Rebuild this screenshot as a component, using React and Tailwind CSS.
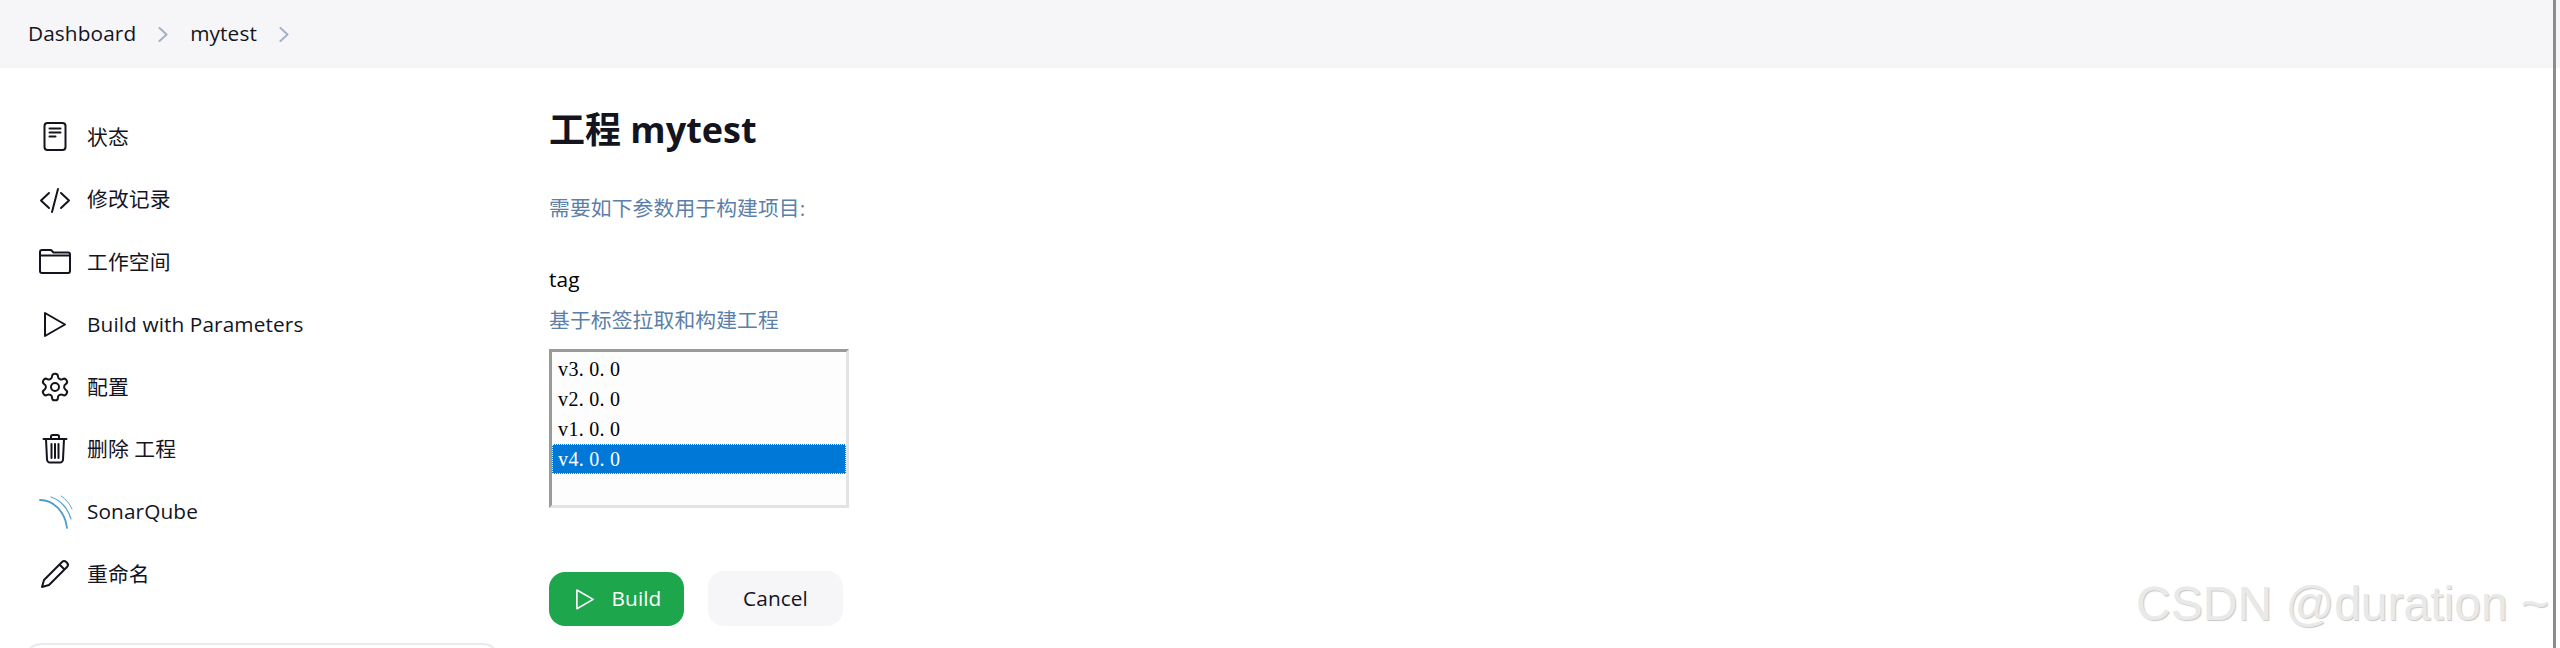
import React from 'react';

const cjk = '"Open Sans", "Noto Sans CJK SC", sans-serif';

const StatusIcon = () => (
  <svg viewBox="0 0 32 32" className="w-8 h-8" fill="none" stroke="currentColor" strokeWidth="2" strokeLinecap="round" strokeLinejoin="round">
    <rect x="5.5" y="2" width="21" height="27" rx="3" />
    <path d="M10.5 7.5h11M10.5 11.5h11M10.5 15.5h6" />
  </svg>
);

const CodeIcon = () => (
  <svg viewBox="0 0 32 32" className="w-8 h-8" fill="none" stroke="currentColor" strokeWidth="2" strokeLinecap="round" strokeLinejoin="round">
    <path d="M10 9 2 16.5l8 7.5M22 9l8 7.5-8 7.5M19 5l-6 23" />
  </svg>
);

const FolderIcon = () => (
  <svg viewBox="0 0 32 32" className="w-8 h-8" fill="none" stroke="currentColor" strokeWidth="2" strokeLinecap="round" strokeLinejoin="round">
    <path d="M1 6v19a2 2 0 0 0 2 2h26a2 2 0 0 0 2-2V8.5a2 2 0 0 0-2-2H14.5L12 4H3a2 2 0 0 0-2 2ZM1 9.5h30" />
  </svg>
);

const PlayIcon = ({ className = 'w-8 h-8' }) => (
  <svg viewBox="0 0 32 32" className={className} fill="none" stroke="currentColor" strokeWidth="2" strokeLinecap="round" strokeLinejoin="round">
    <path d="M6 5v23l20-11.5L6 5Z" />
  </svg>
);

const GearIcon = () => (
  <svg viewBox="0 0 24 24" className="w-8 h-8" fill="none" stroke="currentColor" strokeWidth="1.5" strokeLinecap="round" strokeLinejoin="round">
    <path d="M12.22 2h-.44a2 2 0 0 0-2 2v.18a2 2 0 0 1-1 1.73l-.43.25a2 2 0 0 1-2 0l-.15-.08a2 2 0 0 0-2.73.73l-.22.38a2 2 0 0 0 .73 2.73l.15.1a2 2 0 0 1 1 1.72v.51a2 2 0 0 1-1 1.74l-.15.09a2 2 0 0 0-.73 2.73l.22.38a2 2 0 0 0 2.73.73l.15-.08a2 2 0 0 1 2 0l.43.25a2 2 0 0 1 1 1.73V20a2 2 0 0 0 2 2h.44a2 2 0 0 0 2-2v-.18a2 2 0 0 1 1-1.73l.43-.25a2 2 0 0 1 2 0l.15.08a2 2 0 0 0 2.73-.73l.22-.39a2 2 0 0 0-.73-2.73l-.15-.08a2 2 0 0 1-1-1.74v-.5a2 2 0 0 1 1-1.74l.15-.09a2 2 0 0 0 .73-2.73l-.22-.38a2 2 0 0 0-2.73-.73l-.15.08a2 2 0 0 1-2 0l-.43-.25a2 2 0 0 1-1-1.73V4a2 2 0 0 0-2-2z" />
    <circle cx="12" cy="12" r="3" />
  </svg>
);

const TrashIcon = () => (
  <svg viewBox="0 0 32 32" className="w-8 h-8" fill="none" stroke="currentColor" strokeWidth="2" strokeLinecap="round" strokeLinejoin="round">
    <path d="M4.5 6h23M7 6l1 20.5a3 3 0 0 0 3 3h10a3 3 0 0 0 3-3l1-20.5M12 6V3.5A1.5 1.5 0 0 1 13.5 2h5A1.5 1.5 0 0 1 20 3.5V6M12.5 11v14M16 11v14M19.5 11v14" />
  </svg>
);

const SonarIcon = () => (
  <svg viewBox="0 0 34 34" className="w-[34px] h-[34px]" fill="none" stroke="#4e9bcd" strokeLinecap="round">
    <path d="M1 5c13 0 25 11 27 28" strokeWidth="1.8" />
    <path d="M12 2c9 3 17 11 20 22" strokeWidth="1.1" />
    <path d="M22 1c5 3 9 8 11 13" strokeWidth="0.9" />
  </svg>
);

const PencilIcon = () => (
  <svg viewBox="0 0 32 32" className="w-8 h-8" fill="none" stroke="currentColor" strokeWidth="2" strokeLinecap="round" strokeLinejoin="round">
    <path d="M3 29l2-7L23 4a3 3 0 0 1 4.2 0l.8.8a3 3 0 0 1 0 4.2L10 27l-7 2ZM20.5 6.5l5 5" />
  </svg>
);

const Chevron = () => (
  <svg viewBox="0 0 10 15" className="w-[10px] h-[15px]" fill="none" stroke="#a4b1c8" strokeWidth="2" strokeLinecap="round" strokeLinejoin="round">
    <path d="M1.5 1 8.5 7.5 1.5 14" />
  </svg>
);

const tasks = [
  { label: '状态', icon: <StatusIcon /> },
  { label: '修改记录', icon: <CodeIcon /> },
  { label: '工作空间', icon: <FolderIcon /> },
  { label: 'Build with Parameters', icon: <PlayIcon /> },
  { label: '配置', icon: <GearIcon /> },
  { label: '删除 工程', icon: <TrashIcon /> },
  { label: 'SonarQube', icon: <SonarIcon /> },
  { label: '重命名', icon: <PencilIcon /> },
];

const tags = ['v3.0.0', 'v2.0.0', 'v1.0.0', 'v4.0.0'];

export default function App() {
  return (
    <div className="relative h-[648px] overflow-hidden bg-white text-[#14141f] text-[20.8px] tracking-[0.1px]" style={{ fontFamily: cjk }}>
      <div className="h-[68px] bg-[#f6f6f9] flex items-center pl-[28px] gap-[22px]">
        <span>Dashboard</span>
        <Chevron />
        <span>mytest</span>
        <Chevron />
      </div>

      <div className="flex">
        <aside className="w-[549px] shrink-0 pl-[22px] pt-[38px]">
          <ul className="flex flex-col">
            {tasks.map((t) => (
              <li key={t.label} className="h-[62.4px] flex items-center">
                <span className="w-[65px] pl-[17px] flex items-center">{t.icon}</span>
                <span className="pt-[1px]">{t.label}</span>
              </li>
            ))}
          </ul>
          <div className="mt-[38px] w-[480px] h-[40px] border-2 border-[#e9e9ef] rounded-t-[20px]"></div>
        </aside>

        <main className="pt-[37px]">
          <h1 className="text-[36px] font-bold leading-[50px] tracking-normal">工程 mytest</h1>
          <p className="mt-[37px] text-[#5c7fa9] leading-[32px]">需要如下参数用于构建项目:</p>
          <div className="mt-[39px] leading-[32px] text-black">tag</div>
          <p className="mt-[9px] text-[#5c7fa9] leading-[32px]">基于标签拉取和构建工程</p>
          <div className="mt-[13px] w-[300px] h-[159px] pt-[2px] border-[3px] border-t-[#9a9a9a] border-l-[#9a9a9a] border-r-[#e3e3e3] border-b-[#e3e3e3] bg-[#fdfdfd] text-[20px] tracking-normal" style={{ fontFamily: '"Liberation Serif", "Noto Sans CJK SC", serif' }}>
            {tags.map((tag) => (
              <div
                key={tag}
                className={tag === 'v4.0.0'
                  ? 'h-[30px] leading-[30px] px-[6px] bg-[#0078d7] text-white outline-1 outline-dotted -outline-offset-1 outline-white'
                  : 'h-[30px] leading-[30px] px-[6px] text-black'}
              >
                {tag.split('').map((c, i) => (
                  <span key={i} className="inline-block w-[10.4px]">{c}</span>
                ))}
              </div>
            ))}
          </div>
          <div className="mt-[63px] flex items-end gap-[24px]">
            <button className="w-[135px] h-[54px] rounded-[16px] bg-[#1ea64c] text-white flex items-center justify-center gap-[14px]">
              <PlayIcon className="w-[26px] h-[26px]" />
              <span>Build</span>
            </button>
            <button className="w-[135px] h-[55px] rounded-[16px] bg-[#f6f6f9]">Cancel</button>
          </div>
        </main>
      </div>

      {/* scrollbar thumb */}
      <div className="absolute top-0 bottom-0 right-[4px] w-[3px] bg-[#8c8c8c]"></div>

      <div
        className="absolute right-[11px] bottom-[16px] text-[48px] leading-[56px] tracking-normal text-[#e9e9e9]"
        style={{ fontFamily: '"Liberation Sans", sans-serif', textShadow: '1px 1px 1px #c8c8c8' }}
      >
        CSDN @duration ~
      </div>
    </div>
  );
}
